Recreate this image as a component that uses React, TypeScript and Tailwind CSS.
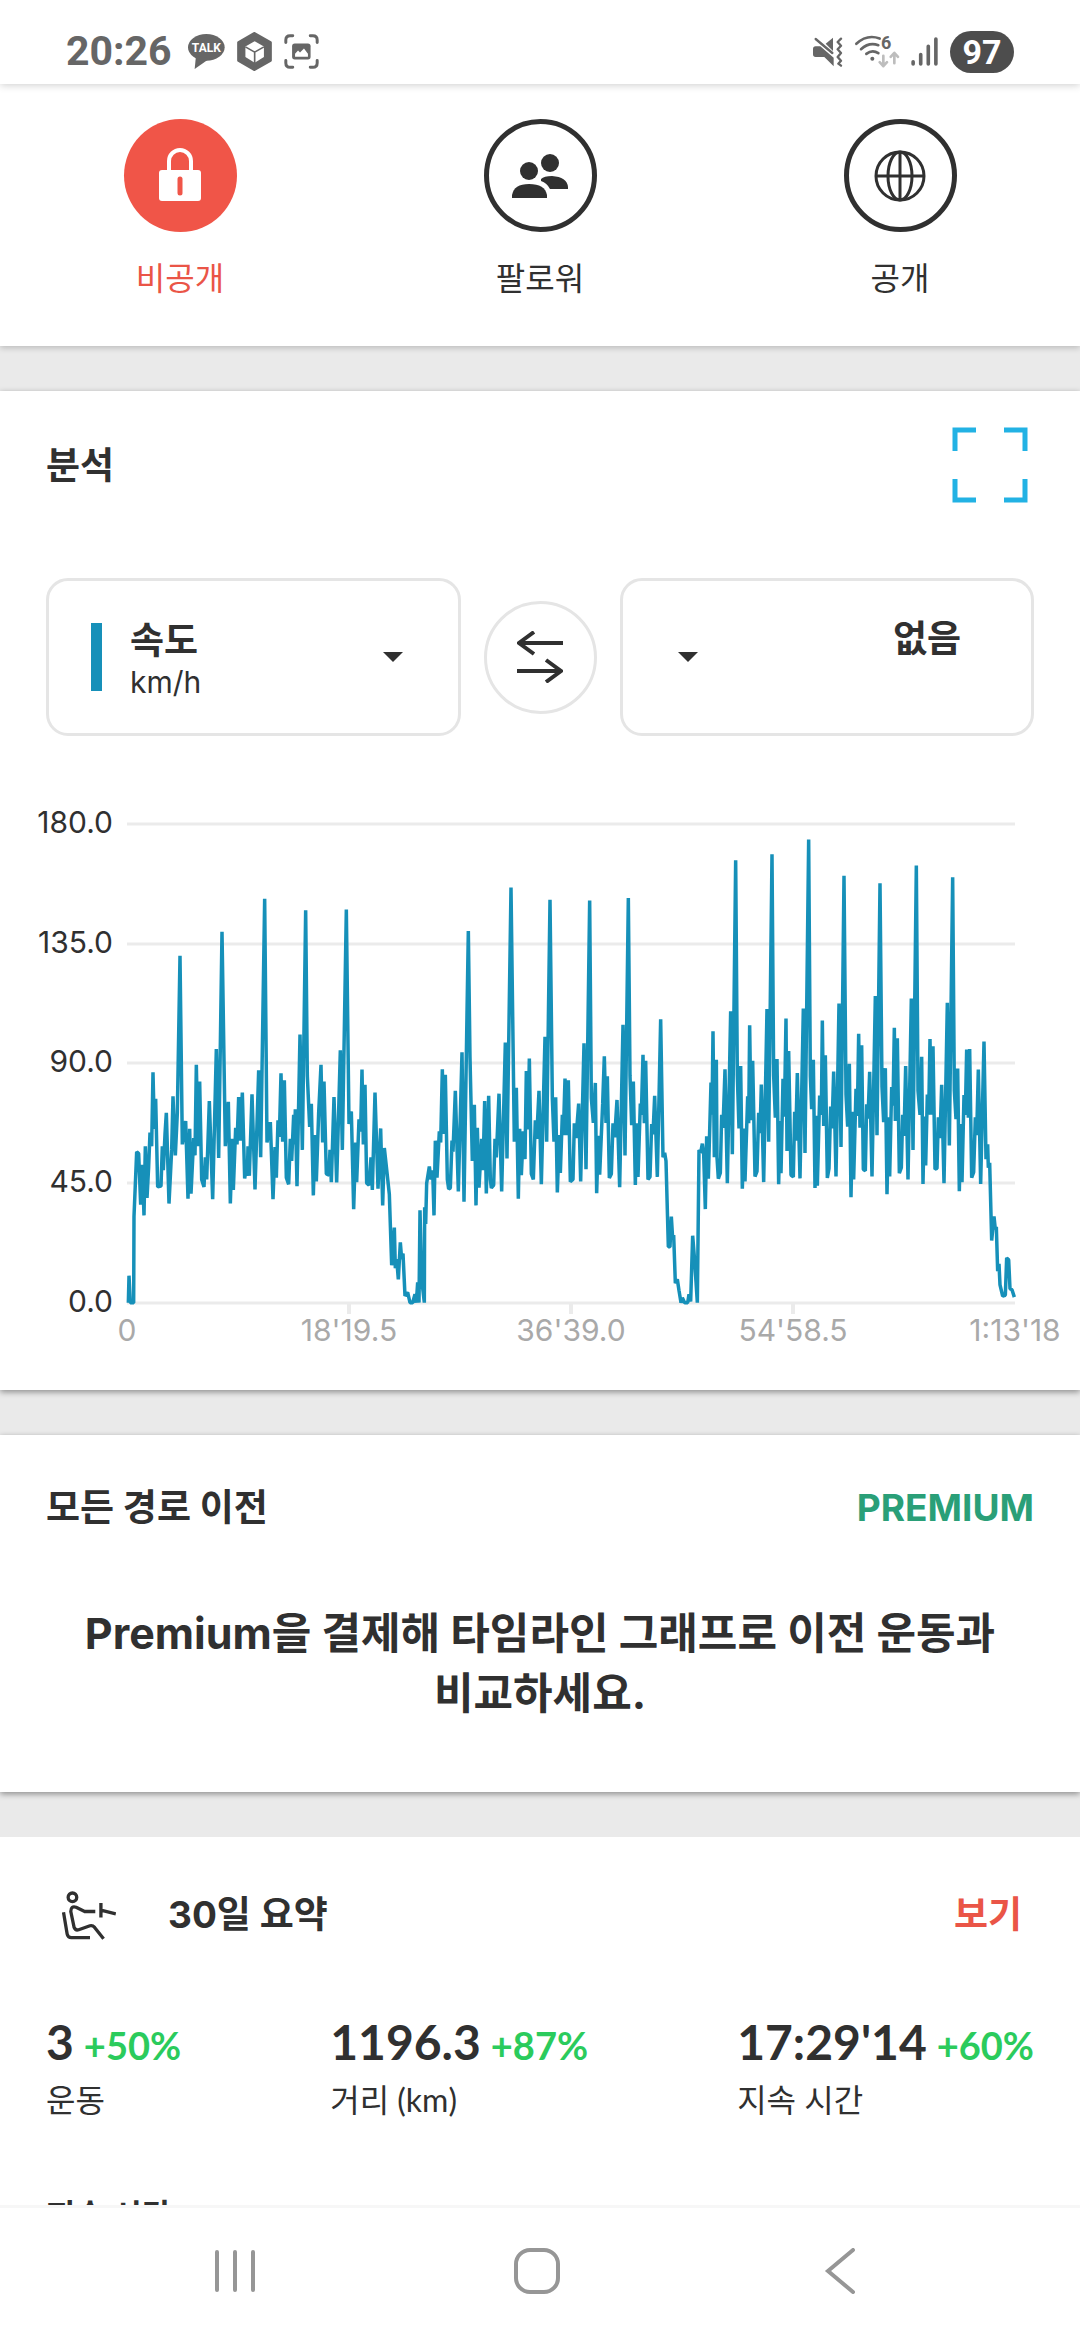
import React, { useState } from "react";

type Privacy = "private" | "followers" | "public";

// Speed trace. Each lap holds "x,y" pairs relative to its own start, on a finer grid than the chart.
const GRID_X = 3;
const GRID_Y = 2.7034;

const LAPS = [
  {
    start: 0,
    points:
      "385,1413 387,1340 391,1413 401,1413 402,1180 410,1005 416,1010 422,1148 427,1040 432,1177 436,990 441,1130 446,1045 450,953 455,990 459,790 463,943 467,862 473,1100 483,1098 487,990 490,1055 495,958 499,900 507,1145 515,1000 519,855 526,1015 532,900 540,475 547,985 557,922 564,1132 569,943 573,1118 578,1025 581,968 585,1015 589,770 594,990 599,815 605,1080 612,1100 616,1020 620,1080 628,868 638,1133 649,727 656,1022 666,410 676,990 685,870 691,1145 697,970 700,1108 707,940 711,985 716,857 721,975 727,845 734,1077 739,1045 742,1070 744,990 748,1070 756,850 765,1107 776,785 782,1020 794,321 801,980 811,925 819,1133 825,992 829,1075 834,920 838,965 843,793 848,978 853,812 859,1075 866,1093 871,970 875,1030 881,905 883,985 886,890 891,1098 900,688 907,1000 917,352 922,800 929,938 934,875 940,1123 945,960 949,1085 956,900 963,770 968,980 972,815 979,1065 987,1068 990,1000 994,1087 1002,857 1010,1088 1021,731 1027,1000 1039,350 1047,930 1054,896 1061,1160 1067,980 1070,1087 1077,917 1082,950 1086,783 1090,985 1095,824 1100,1090 1107,1095 1113,1020 1117,1108 1125,845 1134,1105 1142,942 1148,1150 1153,995 1160,1053 1168,1120 1175,1312",
  },
  {
    start: 1080,
    points:
      "103,1210 106,1320 110,1295 115,1350 121,1250 125,1295 129,1280 135,1395 143,1385 150,1413 158,1413 165,1390 169,1413 173,1358 177,1413 180,1163 185,1350 193,1413 194,1155 197,1200 200,1090 208,1045 213,1080 218,1055 222,1177 226,975 231,1075 238,950 242,980 247,782 251,957 256,797 262,1080 266,1106 271,1103 276,975 279,1005 286,840 295,1112 306,736 312,1140 325,408 330,750 337,1030 343,878 348,1150 352,940 357,1102 365,970 369,1055 374,868 379,1118 386,854 391,1080 394,1103 401,1095 405,970 409,1020 417,848 425,1112 436,710 441,1023 453,291 463,978 469,832 475,1132 479,943 484,1068 490,950 495,1025 499,787 504,945 508,753 514,1065 520,1080 526,920 530,970 537,840 544,1093 555,694 560,978 570,324 577,860 582,978 587,858 592,1115 598,960 601,1062 607,905 610,960 615,807 620,960 625,812 631,1086 639,1080 643,928 648,968 656,875 662,1085 672,712 678,1052 689,326 694,860 700,927 706,819 710,1117 715,962 719,1067 728,875 733,747 738,927 742,801 748,1076 754,1065 759,928 764,966 771,865 779,1101 789,662 795,1015 805,319 810,800 815,933 820,815 826,1095 830,928 834,1073 841,875 844,905 849,743 853,928 857,759 864,1080 870,1073 875,930 879,958 884,854 892,1073 902,647 909,1020 914,1008 918,1030 925,1262 930,1262 934,1180 938,1240 941,1230 946,1360 952,1350 957,1380 963,1413 967,1400 974,1413 983,1413 987,1390 992,1410",
  },
  {
    start: 2040,
    points:
      "38,1232 44,1300 52,1413 57,1000 62,1008 67,983 71,1010 76,1160 80,963 85,1078 93,818 96,905 99,679 103,1020 109,756 111,1020 115,1078 121,1062 125,905 129,940 135,782 142,1090 152,625 157,1012 167,217 172,800 177,942 182,773 187,1105 192,942 195,1085 203,855 206,928 209,663 213,920 218,759 225,1072 231,1058 236,900 240,955 244,823 251,1087 261,619 266,978 276,201 281,800 286,913 291,754 296,1093 300,922 303,1063 309,808 313,910 318,645 321,1003 326,733 333,1068 340,1073 344,897 347,975 352,792 360,1077 370,618 375,1008 386,161 391,800 395,890 400,756 405,1103 408,908 412,1097 419,853 424,905 427,650 431,935 436,744 442,1076 447,1050 452,883 456,942 461,788 468,1072 477,604 483,992 492,259 498,850 503,937 508,767 513,1128 518,897 521,1080 528,835 532,908 536,686 540,940 545,717 550,1053 556,1056 560,877 564,915 569,789 576,1072 586,584 591,960 600,279 606,830 611,925 616,779 621,1120 626,912 629,1072 635,830 639,880 643,670 646,922 652,698 658,1063 664,1048 668,905 672,962 677,773 684,1080 694,591 699,1000 709,231 714,840 720,905 725,748 729,1092 733,910 737,1042 742,850 746,905 750,700 754,905 759,720 765,1052 771,1050 775,912 780,968 785,824 792,1090 802,602 808,988 818,263 823,840 828,917 833,780 838,1112 842,930 846,1087 852,852 856,905 860,729 865,913 869,727 875,1075 881,1060 886,912 890,960 895,783 902,1092 912,707 918,1025 923,985 925,1048 929,1035 935,1245 942,1180 946,1215 949,1208 953,1328 957,1308 960,1365 968,1395 976,1393 980,1292 986,1297 990,1375 996,1378 1003,1398",
  },
];

const SPEED_TRACE = LAPS.flatMap(({ start, points }) =>
  points.split(" ").map((pair) => {
    const [x, y] = pair.split(",").map(Number);
    return `${(start + x) / GRID_X},${y / GRID_Y}`;
  })
).join(" ");

const Y_TICKS = [
  { label: "180.0", y: 44 },
  { label: "135.0", y: 164 },
  { label: "90.0", y: 283 },
  { label: "45.0", y: 403 },
  { label: "0.0", y: 523 },
];

const X_TICKS = [
  { label: "0", x: 127 },
  { label: "18'19.5", x: 349 },
  { label: "36'39.0", x: 571 },
  { label: "54'58.5", x: 793 },
  { label: "1:13'18", x: 1015 },
];

const STATS = [
  { value: "3", change: "+50%", label: "운동" },
  { value: "1196.3", change: "+87%", label: "거리 (km)" },
  { value: "17:29'14", change: "+60%", label: "지속 시간" },
];

const StatusBar: React.FC = () => (
  <header className="relative z-10 flex h-[84px] shrink-0 items-center justify-between bg-white px-[66px] pt-[19px] font-[Roboto,'Noto_Sans_CJK_KR',sans-serif] text-[#666] shadow-[0_1px_8px_rgba(0,0,0,0.2)]">
    <div className="flex items-center gap-3">
      <span className="mr-1 text-[41px] leading-none font-bold">20:26</span>
      <svg viewBox="0 0 111 111" className="size-[37px]" fill="currentColor">
        <ellipse cx="55" cy="43" rx="55" ry="40" />
        <path d="M24 68 L20 108 L66 76 Z" />
        <text x="55" y="57" fontSize="36" fontWeight="700" fill="#fff" textAnchor="middle">TALK</text>
      </svg>
      <svg viewBox="0 0 105 118" className="h-[39px] w-[35px]" fill="currentColor">
        <path d="M52 5 L100 32 V86 L52 113 L5 86 V32 Z" stroke="currentColor" strokeWidth="10" strokeLinejoin="round" />
        <path d="M53 28 L81 44 V76 L53 93 L25 76 V44 Z" fill="#fff" />
        <path d="M25 45 L53 61 L81 45 M53 61 V94" fill="none" stroke="currentColor" strokeWidth="5" />
      </svg>
      <svg viewBox="0 0 105 106" className="size-[35px]" fill="none" stroke="currentColor" strokeWidth="9" strokeLinecap="round">
        <path d="M5 26 V18 Q5 5 18 5 H26 M79 5 H87 Q100 5 100 18 V26 M100 80 V88 Q100 101 87 101 H79 M26 101 H18 Q5 101 5 88 V80" />
        <rect x="24" y="29" width="56" height="48" rx="8" fill="currentColor" stroke="none" />
        <path d="M33 69 V60 L42 50 L48 56 L60 44 L72 60 V69 Z" fill="#fff" stroke="none" />
      </svg>
    </div>
    <div className="flex items-center gap-3">
      <svg viewBox="0 0 90 90" className="size-[30px]" fill="currentColor">
        <path d="M8 28 H22 L62 62 V88 L34 60 H8 Q0 60 0 52 V36 Q0 28 8 28 Z" />
        <path d="M38 20 L60 2 V42 Z" />
        <path d="M8 6 L58 48" stroke="currentColor" strokeWidth="7" strokeLinecap="round" />
        <path d="M84 5 L74 15 L84 26 L74 37 L84 48 L74 60 L84 71 L76 80 L84 86" fill="none" stroke="currentColor" strokeWidth="7" strokeLinecap="round" strokeLinejoin="round" />
      </svg>
      <svg viewBox="0 0 132 98" className="h-[33px] w-[44px] overflow-visible" fill="none" strokeLinecap="round" strokeLinejoin="round">
        <g stroke="currentColor" strokeWidth="8">
          <path d="M4 26 Q36 -4 74 10" />
          <path d="M18 42 Q42 20 70 30" />
          <path d="M34 56 Q52 42 70 54" />
        </g>
        <circle cx="52" cy="71" r="6" fill="currentColor" />
        <text x="78" y="42" fontSize="54" fontWeight="700" fill="currentColor">6</text>
        <path d="M85 62 V92 M74 81 L85 93 L96 81 M118 84 V54 M107 65 L118 53 L129 65" stroke="#bdbdbd" strokeWidth="8" />
      </svg>
      <svg viewBox="0 0 81 88" className="h-[29px] w-[27px]" stroke="currentColor" strokeWidth="11" strokeLinecap="round">
        <path d="M6 75 V82 M29 53 V82 M52 28 V82 M75 6 V82" />
      </svg>
      <span className="flex h-[42px] w-[64px] items-center justify-center rounded-full bg-[#4d4d4d] text-[34px] leading-none font-bold text-white">
        97
      </span>
    </div>
  </header>
);

const LockIcon: React.FC = () => (
  <svg viewBox="0 0 42 58" className="h-[58px] w-[42px]">
    <path d="M10 26 V14 A11 11 0 0 1 32 14 V26" fill="none" stroke="currentColor" strokeWidth="4" />
    <rect y="23" width="42" height="31" rx="3" fill="currentColor" />
    <path d="M21 32 V46" stroke="#f05548" strokeWidth="5" strokeLinecap="round" />
  </svg>
);

const PeopleIcon: React.FC = () => (
  <svg viewBox="0 0 56 46" className="h-[46px] w-[56px]" fill="currentColor">
    <circle cx="17" cy="18" r="9" />
    <circle cx="38" cy="10" r="9" />
    <path d="M0 45 V42 Q2 31 17 31 Q33 31 35 42 V45 Z" />
    <path d="M29 26 Q32 23 40 23 Q55 24 56 34 V36 H38 Q35 30 29 28 Z" />
  </svg>
);

const GlobeIcon: React.FC = () => (
  <svg viewBox="0 0 52 52" className="size-[52px]" fill="none" stroke="currentColor" strokeWidth="3">
    <circle cx="26" cy="26" r="24" />
    <ellipse cx="26" cy="26" rx="12" ry="24" />
    <path d="M26 2 V50 M2 26 H50" />
  </svg>
);

const PRIVACY_OPTIONS: { id: Privacy; label: string; icon: React.ReactNode }[] = [
  { id: "private", label: "비공개", icon: <LockIcon /> },
  { id: "followers", label: "팔로워", icon: <PeopleIcon /> },
  { id: "public", label: "공개", icon: <GlobeIcon /> },
];

const PrivacyPicker: React.FC = () => {
  const [selected, setSelected] = useState<Privacy>("private");

  return (
    <section className="grid grid-cols-3 bg-white pt-[35px] pb-[44px] shadow-[0_2px_6px_rgba(0,0,0,0.2)]">
      {PRIVACY_OPTIONS.map(({ id, label, icon }) => (
        <button
          key={id}
          aria-pressed={selected === id}
          onClick={() => setSelected(id)}
          className={`flex flex-col items-center gap-6 ${selected === id ? "text-[#ea5547]" : "text-[#303030]"}`}
        >
          <span
            className={`flex size-[113px] items-center justify-center rounded-full ${
              selected === id ? "bg-[#f05548] text-white" : "border-[5px] border-[#303030]"
            }`}
          >
            {icon}
          </span>
          <span className="text-[32px] leading-[46px]">{label}</span>
        </button>
      ))}
    </section>
  );
};

const Caret: React.FC = () => (
  <svg viewBox="0 0 20 10" className="h-[10px] w-[20px] shrink-0" fill="currentColor">
    <path d="M0 0 H20 L10 10 Z" />
  </svg>
);

const SpeedChart: React.FC = () => (
  <svg viewBox="0 0 1080 583" className="mt-[44px] block w-full" role="img" aria-label="속도 km/h">
    {Y_TICKS.map(({ label, y }) => (
      <g key={label}>
        <path d={`M127 ${y} H1015`} stroke="#ebebeb" strokeWidth="3" />
        <text x="113" y={y + 9} fontSize="30" textAnchor="end" fill="#303030">{label}</text>
      </g>
    ))}
    {X_TICKS.map(({ label, x }, i) => (
      <g key={label}>
        {i > 0 && i < 4 && <path d={`M${x} 523 V534`} stroke="#ebebeb" strokeWidth="4" />}
        <text x={x} y="561" fontSize="30" textAnchor="middle" fill="#a9a9a9">{label}</text>
      </g>
    ))}
    <polyline points={SPEED_TRACE} fill="none" stroke="#1690b9" strokeWidth="3.5" strokeLinejoin="bevel" />
  </svg>
);

const Analysis: React.FC = () => (
  <section className="bg-white pt-[36px] pb-[27px] shadow-[0_2px_6px_rgba(0,0,0,0.4)]">
    <div className="flex items-center justify-between pr-[52px] pl-[46px]">
      <h2 className="pt-[2px] text-[37px] leading-[54px] font-bold">분석</h2>
      <button aria-label="전체 화면" className="text-[#22b2e4]">
        <svg viewBox="0 0 76 76" className="size-[76px]" fill="none" stroke="currentColor" strokeWidth="5">
          <path d="M24 3 H3 V24 M52 3 H73 V24 M73 52 V73 H52 M24 73 H3 V52" />
        </svg>
      </button>
    </div>

    <div className="mt-[75px] grid grid-cols-[1fr_auto_1fr] items-center gap-[23px] px-[46px]">
      <button className="flex h-[158px] items-center rounded-[22px] border-[3px] border-[#e5e5e5] pr-[55px] pl-[42px] text-left">
        <span className="h-[68px] w-[11px] bg-[#1690b9]" />
        <span className="ml-[28px] flex flex-1 flex-col pt-[6px]">
          <span className="text-[37px] leading-[44px] font-bold">속도</span>
          <span className="text-[30px] leading-[38px]">km/h</span>
        </span>
        <Caret />
      </button>
      <button aria-label="축 바꾸기" className="flex size-[113px] items-center justify-center rounded-full border-[3px] border-[#e5e5e5]">
        <svg viewBox="0 0 46 52" className="h-[52px] w-[46px]" fill="none" stroke="currentColor" strokeWidth="4">
          <path d="M46 12 H2 M17 1 L2 12 L17 23 M0 40 H44 M29 29 L44 40 L29 51" />
        </svg>
      </button>
      <button className="flex h-[158px] items-center justify-between rounded-[22px] border-[3px] border-[#e5e5e5] pr-[70px] pl-[55px]">
        <Caret />
        <span className="pb-[36px] text-[37px] leading-[44px] font-bold">없음</span>
      </button>
    </div>

    <SpeedChart />
  </section>
);

const PreviousRoutes: React.FC = () => (
  <section className="bg-white px-[46px] pt-[46px] pb-[69px] shadow-[0_2px_6px_rgba(0,0,0,0.4)]">
    <div className="flex items-center justify-between">
      <h2 className="text-[37px] leading-[54px] font-bold">모든 경로 이전</h2>
      <a href="#premium" className="text-[37px] leading-[54px] font-bold text-[#2a9f78]">
        PREMIUM
      </a>
    </div>
    <p className="mt-[68px] px-[30px] text-center text-[43px] leading-[60px] font-bold break-keep">
      Premium을 결제해 타임라인 그래프로 이전 운동과 비교하세요.
    </p>
  </section>
);

const Summary: React.FC = () => (
  <section className="bg-white px-[46px] pt-[51px] pb-20">
    <div className="flex items-center pr-[12px] pl-[16px]">
      <svg viewBox="0 0 162 148" className="h-[49px] w-[54px]" fill="none" stroke="currentColor" strokeWidth="10" strokeLinejoin="round">
        <circle cx="31" cy="19" r="13" />
        <path d="M4 64 L15 130 Q17 141 28 141 H84" />
        <path d="M100 62 H68 L42 49 Q26 44 26 62 L36 110 Q40 120 50 117 L84 105 Q92 103 98 110 L125 144" />
        <path d="M117 36 V80 M117 58 L162 69" />
      </svg>
      <h2 className="ml-[52px] flex-1 text-[37px] leading-[54px] font-bold">30일 요약</h2>
      <a href="#summary" className="text-[37px] leading-[54px] font-bold text-[#ea5547]">
        보기
      </a>
    </div>
    <div className="mt-[70px] flex justify-between font-[Lato,'Noto_Sans_CJK_KR',sans-serif]">
      {STATS.map(({ value, change, label }) => (
        <div key={label} className="flex flex-col gap-[2px]">
          <div className="flex items-baseline gap-[10px] leading-[60px] font-bold">
            <span className="text-[48px]">{value}</span>
            <span className="text-[38px] text-[#2bcb5c]">{change}</span>
          </div>
          <span className="text-[32px] leading-[46px]">{label}</span>
        </div>
      ))}
    </div>
    <h3 className="mt-[66px] text-[32px] leading-[54px] font-bold">지속 시간</h3>
  </section>
);

const NavBar: React.FC = () => (
  <nav className="flex h-[135px] shrink-0 items-center justify-between border-t-[3px] border-[#f7f7f7] bg-white pr-[218px] pb-[6px] pl-[212px] text-[#969696]">
    <button aria-label="최근 앱">
      <svg viewBox="0 0 46 46" className="size-[46px]" stroke="currentColor" strokeWidth="4" strokeLinecap="round">
        <path d="M5 4 V42 M23 4 V42 M41 4 V42" />
      </svg>
    </button>
    <button aria-label="홈">
      <svg viewBox="0 0 46 46" className="size-[46px]" fill="none" stroke="currentColor" strokeWidth="4">
        <rect x="2" y="2" width="42" height="42" rx="14" />
      </svg>
    </button>
    <button aria-label="뒤로">
      <svg viewBox="0 0 46 46" className="size-[46px]" fill="none" stroke="currentColor" strokeWidth="4" strokeLinecap="round">
        <path d="M37 2 L12 23 L37 44" />
      </svg>
    </button>
  </nav>
);

export const App: React.FC = () => {
  return (
    <div className="flex h-screen flex-col bg-[#eaeaea] font-[Inter,'Noto_Sans_CJK_KR',sans-serif] text-[#303030]">
      <StatusBar />
      <main className="flex flex-1 flex-col gap-[45px] overflow-hidden">
        <PrivacyPicker />
        <Analysis />
        <PreviousRoutes />
        <Summary />
      </main>
      <NavBar />
    </div>
  );
};

export default App;
